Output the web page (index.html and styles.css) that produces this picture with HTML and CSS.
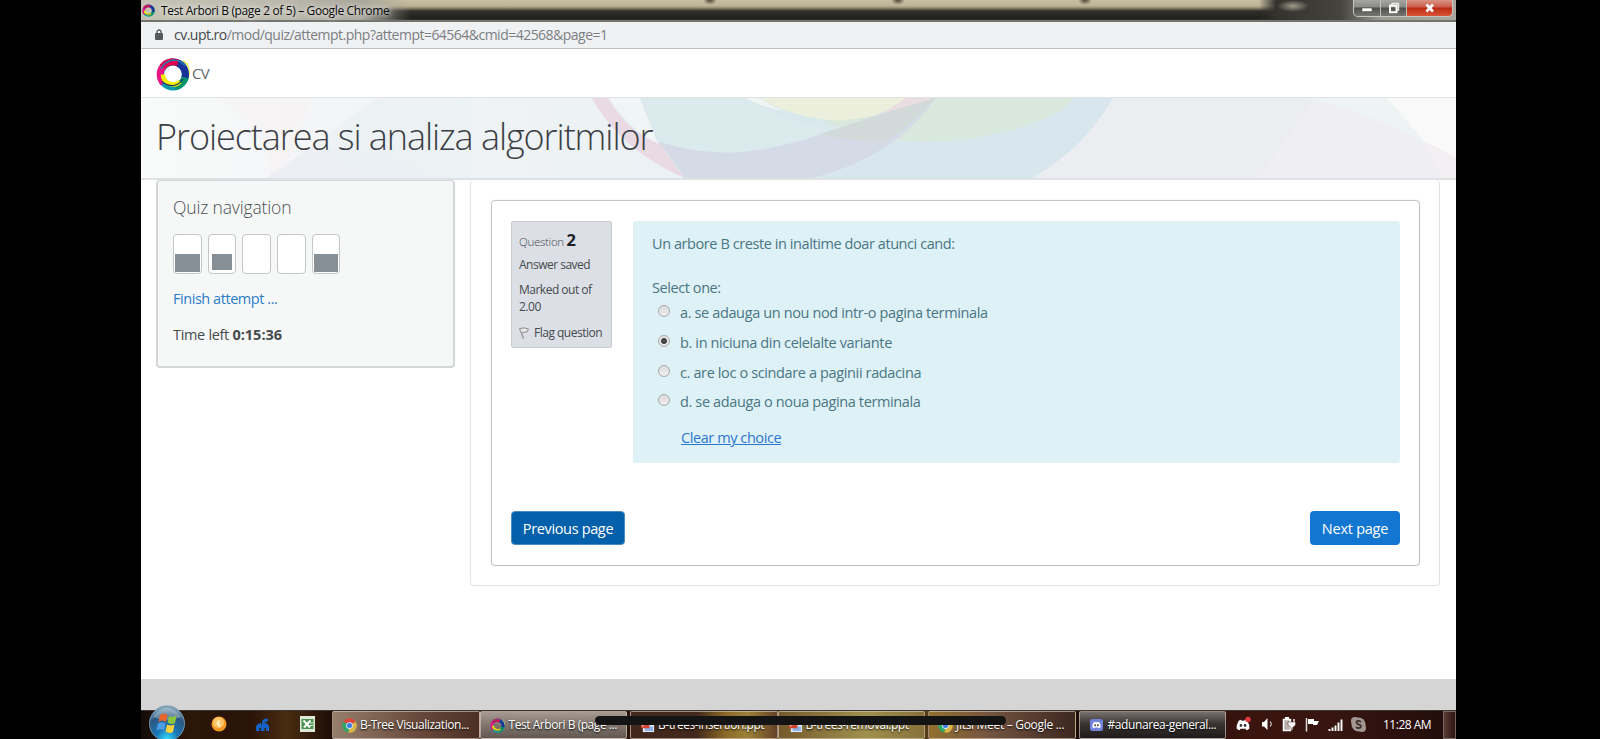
FILE: index.html
```html
<!DOCTYPE html>
<html lang="en">
<head>
<meta charset="utf-8">
<title>Test Arbori B (page 2 of 5)</title>
<link rel="stylesheet" href="styles.css">
</head>
<body>
<svg width="0" height="0" class="defs">
  <defs>
    <symbol id="ring" viewBox="0 0 34 34">
      <path d="M27 4Q34 7 33 18" fill="none" stroke="#eef25a" stroke-width="1.500"/>
      <circle cx="17" cy="17.500" r="12.500" fill="none" stroke="#0a9cae" stroke-width="7"/>
      <path d="M29.500 16A12.500 12.500 0 0 1 19 29.500" fill="none" stroke="#079468" stroke-width="7"/>
      <path d="M7.500 26A12.500 12.500 0 0 1 8 8.500" fill="none" stroke="#ec1588" stroke-width="7"/>
      <path d="M6.500 10A12.500 12.500 0 0 1 24 7.300" fill="none" stroke="#e00050" stroke-width="7"/>
      <path d="M22 6A12.500 12.500 0 0 1 29 20.500" fill="none" stroke="#1a3399" stroke-width="7"/>
      <path d="M7 17.500A10 10 0 0 0 24 24.600" fill="none" stroke="#f5f000" stroke-width="4.500"/>
      <path d="M6 24.500Q11 29 18 28.500Q24 27 27 22" fill="none" stroke="#14306c" stroke-width="1.200"/>
      <path d="M5 12Q9 4 17 3Q25 3 29 9" fill="none" stroke="#207cb0" stroke-width="1.300"/>
    </symbol>
    <symbol id="chrome" viewBox="0 0 16 16">
      <path d="M8 8L1.500 4A7.500 7.500 0 0 1 14.500 4z" fill="#e2463a"/>
      <path d="M8 8L1.500 4A7.500 7.500 0 0 0 7 15.500z" fill="#2fa866"/>
      <path d="M8 8L14.500 4A7.500 7.500 0 0 1 7 15.500z" fill="#d9b648"/>
      <circle cx="8" cy="8" r="3.600" fill="#dfe8f5"/><circle cx="8" cy="8" r="2.700" fill="#3b7be0"/>
    </symbol>
    <symbol id="ppt" viewBox="0 0 16 16">
      <rect x="3" y="2" width="12" height="13" fill="#e9eef8"/><rect x="5" y="9" width="9" height="5" fill="#8db4ea"/>
      <rect x="1" y="3" width="9" height="8" fill="#d2452f"/><path d="M3 9V5h3a1 1 0 0 1 0 2H4" stroke="#fff" fill="none"/>
    </symbol>
    <symbol id="discord" viewBox="0 0 16 14">
      <path d="M3 2Q5 1 6 1L6.500 2H9.500L10 1Q11 1 13 2Q16 7 15.500 11Q13.500 13 12 13L11 11.500H5L4 13Q2.500 13 .5 11Q0 7 3 2z"/>
      <ellipse cx="5.600" cy="7.500" rx="1.500" ry="1.700" class="eye"/><ellipse cx="10.400" cy="7.500" rx="1.500" ry="1.700" class="eye"/>
    </symbol>
  </defs>
</svg>

<div class="window">
  <div class="titlebar">
    <svg class="tab-icon"><use href="#ring"/></svg>
    <span class="win-title">Test Arbori B (page 2 of 5) – Google Chrome</span>
    <div class="win-controls">
      <div class="wc wc-min"><svg width="12" height="10"><rect x="1" y="5" width="10" height="3.500" fill="#fff" stroke="#555" stroke-width=".6"/></svg></div>
      <div class="wc wc-restore"><svg width="12" height="12"><path d="M4 3V1.500H10.500V8H9" fill="none" stroke="#eee" stroke-width="1.400"/><rect x="2" y="3.700" width="6.500" height="6.500" fill="none" stroke="#fff" stroke-width="2"/></svg></div>
      <div class="wc wc-close"><svg width="12" height="10"><path d="M2.500 1.500L9 8.500M9 1.500L2.500 8.500" stroke="#fff" stroke-width="2.600"/></svg></div>
    </div>
  </div>

  <div class="urlbar">
    <svg class="lock" viewBox="0 0 8 11"><rect y="4" width="8" height="7" rx="1" fill="#55585c"/><path d="M2 5V3a2 2 0 0 1 4 0v2" fill="none" stroke="#55585c" stroke-width="1.300"/></svg>
    <span class="url"><b>cv.upt.ro</b>/mod/quiz/attempt.php?attempt=64564&amp;cmid=42568&amp;page=1</span>
  </div>

  <header class="site-header">
    <svg class="logo"><use href="#ring"/></svg>
    <span class="brand">CV</span>
  </header>

  <div class="banner">
    <svg class="banner-art" viewBox="0 0 1315 82" preserveAspectRatio="none">
      <defs><linearGradient id="bg"><stop offset="0" stop-color="#f9fafa"/><stop offset=".17" stop-color="#f2f4f6"/><stop offset=".4" stop-color="#ebf1f4"/></linearGradient></defs>
      <rect width="1315" height="82" fill="url(#bg)"/>
      <path d="M80 0H170L150 60L130 82Q130 40 80 0z" fill="#f6f2f4" opacity=".7"/>
      <path d="M240 0L125 82H290Q250 50 170 50z" fill="#e8ebf1" opacity=".6"/>
      <path d="M240 0Q200 25 175 48L230 82H330V0z" fill="#eaf1f4" opacity=".7"/>
      <path d="M469 0H499L518 49Q490 32 469 0z" fill="#f0f5f6"/>
      <path d="M499 0H972Q945 50 892 82H543Q515 45 499 0z" fill="#d8e7ed"/>
      <path d="M499 0H604Q650 24 695 30Q650 50 590 56Q550 56 516 44z" fill="#dbeaec"/>
      <path d="M604 0H622Q660 19 698 24L680 31Q640 22 604 0z" fill="#d9e8ec"/>
      <path d="M604 0H619Q632 10 648 15Q620 9 604 0z" fill="#f0f5f4"/>
      <path d="M619 0H770Q735 22 700 24Q650 20 619 0z" fill="#ecefdc"/>
      <path d="M793 0H932Q925 16 870 33Q810 48 765 44Q720 39 680 23Q730 25 793 0z" fill="#d8e8dc"/>
      <path d="M765 0H795Q765 15 735 20z" fill="#eadde1"/>
      <path d="M516 44Q550 56 590 56Q640 54 700 30Q760 16 795 0Q755 60 672 82H543Q535 65 516 44z" fill="#d5dbe6"/>
      <path d="M680 37Q735 17 795 0Q770 28 745 44Q710 45 680 37z" fill="#d1dad8"/>
      <path d="M451 0H467Q487 35 520 48L543 82Q478 52 451 0z" fill="#e9dae4"/>
      <path d="M972 0H1315V82H892Q945 50 972 0z" fill="#ecedf1"/>
      <path d="M1175 0L1117 82H1315V0z" fill="#efeef2"/>
      <path d="M1165 0H1248L1285 47Q1230 16 1165 0z" fill="#eef3f3"/>
      <path d="M1246 0H1315V61L1283 44z" fill="#f9f9fa"/>
      <path d="M1283 44L1315 61V82H1300z" fill="#f4eff2"/>
    </svg>
    <h1>Proiectarea si analiza algoritmilor</h1>
  </div>

  <div class="content">
    <aside class="nav-card">
      <h2>Quiz navigation</h2>
      <div class="pages">
        <div class="page saved"><i></i></div>
        <div class="page saved current"><i></i></div>
        <div class="page"></div>
        <div class="page"></div>
        <div class="page saved"><i></i></div>
      </div>
      <a class="finish">Finish attempt ...</a>
      <div class="timer">Time left <b>0:15:36</b></div>
    </aside>

    <main class="main-card">
      <div class="quiz">
        <div class="question">
          <div class="info">
            <div class="qno"><span>Question</span> <b>2</b></div>
            <div class="state">Answer saved</div>
            <div class="grade">Marked out of<br>2.00</div>
            <div class="flag"><svg width="10" height="12" viewBox="0 0 10 12"><path d="M.5 1L4.500 11.500" stroke="#999" stroke-width="1.500"/><path d="M1 1.500Q5 0 9.500 2L8 5Q5 4.500 3 6" fill="#e8e8ea" stroke="#8c8c8c" stroke-width="1"/></svg><span>Flag question</span></div>
          </div>
          <div class="formulation">
            <p class="qtext">Un arbore B creste in inaltime doar atunci cand:</p>
            <p class="prompt">Select one:</p>
            <div class="answer"><i class="radio"></i><span>a. se adauga un nou nod intr-o pagina terminala</span></div>
            <div class="answer"><i class="radio on"></i><span>b. in niciuna din celelalte variante</span></div>
            <div class="answer"><i class="radio"></i><span>c. are loc o scindare a paginii radacina</span></div>
            <div class="answer"><i class="radio"></i><span>d. se adauga o noua pagina terminala</span></div>
            <a class="clear">Clear my choice</a>
          </div>
        </div>
        <div class="buttons">
          <div class="btn prev">Previous page</div>
          <div class="btn next">Next page</div>
        </div>
      </div>
    </main>
  </div>

  <div class="page-foot"></div>

  <div class="taskbar">
    <div class="orb">
      <svg width="38" height="36" viewBox="0 0 38 36">
        <defs><radialGradient id="orb" cx=".5" cy=".95" r=".9"><stop offset="0" stop-color="#35e0ff"/><stop offset=".35" stop-color="#1a78b8"/><stop offset=".75" stop-color="#2c5680"/><stop offset="1" stop-color="#86a8be"/></radialGradient></defs>
        <circle cx="19" cy="18.500" r="17.500" fill="url(#orb)" stroke="#6f94ac"/>
        <path d="M5 12Q19 -6 33 12Q19 18 5 12z" fill="#fff" opacity=".28"/>
        <path d="M12 10Q16 7 19.500 10L18 17Q14 14 10.500 17z" fill="#e8642c"/>
        <path d="M21 11Q24 13 28.500 10.500L27 18Q23 20 19.500 17.500z" fill="#8cc63e"/>
        <path d="M10 18.500Q14 16 17.500 18.500L16 25.500Q12 23 8.500 25.500z" fill="#4f9de8"/>
        <path d="M19 19.500Q22 21.500 26.500 19.500L25 27Q21 29 17.500 26.500z" fill="#fbd13c"/>
      </svg>
    </div>
    <svg class="pin pin-orange" width="16" height="16"><circle cx="8" cy="8" r="7.500" fill="#f59a23"/><circle cx="7.500" cy="6.500" r="5.500" fill="#fdc566"/><path d="M8.500 4.500L6.500 7.500L9.500 10.500" fill="none" stroke="#fff3d0" stroke-width="1.800"/></svg>
    <svg class="pin pin-blue" width="16" height="16"><path d="M1 14V9L3 7L6 5.500V8H7V4L9 2L13 1.500V4L9 5.500L12 6.500L14 9V14H11V11H9.500V14H6V11H4.500V14z" fill="#1561c4"/></svg>
    <svg class="pin pin-xls" width="15" height="16"><rect width="15" height="16" fill="#dfeadb"/><rect x="1.500" y="3" width="12" height="10" fill="#4d9150"/><path d="M3.500 4.500L10 11.500M10.500 4.500L4 11.500" stroke="#fff" stroke-width="2"/><path d="M10 7h3M10 9.500h3" stroke="#dfeadb"/></svg>
    <div class="tasks">
      <div class="task t1"><svg><use href="#chrome"/></svg><span>B-Tree Visualization...</span></div>
      <div class="task t2"><svg><use href="#ring"/></svg><span>Test Arbori B (page ...</span></div>
      <div class="task t3"><svg><use href="#ppt"/></svg><span>B-trees-insertion.ppt</span></div>
      <div class="task t4"><svg><use href="#ppt"/></svg><span>B-trees-removal.ppt</span></div>
      <div class="task t5"><svg><use href="#chrome"/></svg><span>Jitsi Meet – Google ...</span></div>
      <div class="task t6"><svg class="dc" viewBox="0 0 15 15"><rect x="1" y="1" width="13" height="12" rx="2.500" fill="#7082da"/><use href="#discord" x="3" y="3" width="9" height="8" fill="#fff"/></svg><span>#adunarea-general...</span></div>
    </div>
    <div class="tray">
      <svg class="i-dc" width="16" height="16"><use href="#discord" y="3" width="14" height="12"/><circle cx="12" cy="3.500" r="2.700" fill="#e23b3b"/></svg>
      <svg class="i-vol" width="12" height="14"><path d="M1 5H3L6.500 1V13L3 9.500H1z" fill="#fff"/><path d="M9 4.500Q11.500 7 9 9.500" fill="none" stroke="#bbb" stroke-width="1.200"/></svg>
      <svg class="i-bat" width="14" height="15"><rect x="1.500" y="2.500" width="7" height="11" fill="#b9aeaa" stroke="#fff" stroke-width="1.500"/><path d="M3 1H7" stroke="#fff" stroke-width="2"/><path d="M8 2V5M12 2V5" stroke="#fff" stroke-width="1.400"/><path d="M6 5H13.500V8L10.800 10.500V13H9.200V10.500L6 8z" fill="#fff" stroke="#40201a" stroke-width=".5"/></svg>
      <svg class="i-flag" width="15" height="15"><path d="M1.500 1V14.500" stroke="#ddd" stroke-width="1.500"/><path d="M3 2H9V4H14L12 8H8V7H3z" fill="#fff"/></svg>
      <svg class="i-sig" width="15" height="12"><path d="M1.500 12V10M4.500 12V8.500M7.500 12V6.500M10.500 12V3.500M13.500 12V.5" stroke="#fff" stroke-width="1.900"/></svg>
      <svg class="i-sky" width="17" height="17"><circle cx="5" cy="5" r="4" fill="#a39791"/><circle cx="8.500" cy="8.500" r="7" fill="#a39791"/><circle cx="12" cy="12" r="4" fill="#a39791"/><path d="M11 6Q9 4.300 7 5.200Q5.500 7 8.500 8.400Q12 9.500 10.500 11.500Q8 13 6 11" fill="none" stroke="#40312d" stroke-width="1.900"/></svg>
      <span class="clock">11:28 AM</span>
    </div>
    <div class="show-desktop"></div>
    <div class="pill"></div>
  </div>
</div>
</body>
</html>
```
FILE: styles.css
```css
* { box-sizing: border-box; }
body { margin: 0; background: #000; font-family: "Open Sans", "Noto Sans", sans-serif; color: #454a4e; }
h1, h2, p { margin: 0; font-weight: 400; }
.defs { position: absolute; }
.window { width: 1315px; height: 739px; margin-left: 141px; background: #fff; display: flex; flex-direction: column; overflow: hidden; white-space: nowrap; }

/* window frame */
.titlebar { height: 22px; flex: none; display: flex; align-items: flex-start; border-bottom: 2px solid #74746f;
  background: radial-gradient(ellipse 16px 6px at 1152px 6px, #a09b8c, transparent),
    radial-gradient(ellipse 7px 5px at 569px 0, #4c4232, transparent),
    radial-gradient(ellipse 7px 5px at 757px 0, #4c4232, transparent),
    radial-gradient(ellipse 7px 5px at 944px 0, #4c4232, transparent),
    linear-gradient(90deg, #c5c4b4 0, #b9b7aa 150px, #a9a69a 220px, rgba(150,145,130,0) 270px),
    linear-gradient(90deg, transparent 1118px, #33322d 1135px, #45443f 1200px, #9a9a92 1240px, #aaa89c 1315px),
    linear-gradient(#c9bfa2 0, #bcb295 6px, #8f886f 8px, #30302b 11px, #1d1d1a 19px, #45453f 20px); }
.tab-icon { width: 13px; height: 13px; margin: 4px 0 0 1px; }
.win-title { margin-left: 6px; font-size: 12px; line-height: 21px; color: #0b0b0b; text-shadow: 0 0 5px #fff, 0 0 8px #ddd; letter-spacing: -.36px; }
.win-controls { margin: 0 3px 0 auto; height: 17px; display: flex; border: 1px solid #c7c7c2; border-top: 0; border-radius: 0 0 5px 5px; overflow: hidden; }
.wc { display: flex; align-items: center; justify-content: center; background: linear-gradient(#a7a6a1 0, #8a8a86 7px, #4e4e4c 8px, #777673); border-right: 1px solid #c0c0bc; }
.wc-min { width: 27px; }
.wc-restore { width: 26px; }
.wc-close { width: 45px; border: 0; background: linear-gradient(#d99384 0, #cc5d49 7px, #b92a12 8px, #dc5636); }
.urlbar { height: 27px; flex: none; display: flex; background: #f0f1f3; border-bottom: 1px solid #bfc0c2; }
.lock { width: 8px; height: 11px; margin: 7px 0 0 14px; }
.url { margin-left: 11px; font-size: 14px; line-height: 25px; color: #7b7f84; letter-spacing: -.52px; }
.url b { font-weight: 400; color: #45494d; }

/* site header and banner */
.site-header { height: 48px; flex: none; display: flex; }
.logo { width: 34px; height: 34px; margin: 8px 0 0 15px; }
.brand { margin-left: 2px; font-size: 15px; line-height: 48px; color: #66696c; letter-spacing: -.8px; }
.banner { height: 83px; flex: none; display: grid; border-bottom: 2px solid #dfe2e4; border-top: 1px solid #dfe1e2; }
.banner-art { grid-area: 1/1; width: 1315px; height: 80px; }
.banner h1 { grid-area: 1/1; z-index: 1; padding-left: 15px; font-size: 36px; font-weight: 300; line-height: 77px; color: #3b3f45; letter-spacing: -1.070px; }

/* content */
.content { display: flex; align-items: flex-start; height: 499px; flex: none; padding: 0 16px 0 15px; gap: 15px; }
.nav-card { width: 299px; height: 188px; padding: 14px 15px 0; background: #f6f8f8; border: 2px solid #d4d6d7; border-top-width: 1px; border-radius: 4px; }
.nav-card h2 { font-size: 17.500px; font-weight: 300; line-height: 24px; color: #4b4f52; letter-spacing: -.15px; }
.pages { display: flex; gap: 6px; margin-top: 15px; }
.page { width: 28.700px; height: 40px; border: 1px solid #c4c6c7; border-radius: 4px; background: #fff; padding: 19px 1px 1px; display: flex; }
.page i { flex: 1; height: 18px; background: #868e96; }
.page.current { padding: 19px 3px 3px; }
.page.current i { height: 16px; }
.finish { display: block; margin-top: 13px; font-size: 14.500px; line-height: 24px; color: #2b7bc9; letter-spacing: -.45px; }
.timer { margin-top: 12px; font-size: 14.500px; line-height: 24px; letter-spacing: -.32px; }
.timer b { font-weight: 700; letter-spacing: 0; }
.main-card { flex: 1; height: 406px; padding: 20px 19px 0 20px; border: 1px solid #e3e3e3; border-top: 0; border-radius: 4px; }
.quiz { height: 366px; padding: 20px 19px 0; border: 1px solid #c2c3c4; box-shadow: 0 0 1px #c8c8c8; border-radius: 4px; display: flex; flex-direction: column; }
.question { display: flex; gap: 21px; height: 242px; }
.info { width: 101px; height: 127px; background: #dcdfe5; border: 1px solid #c8cbd0; border-radius: 2px; padding: 4px 7px; font-size: 12px; line-height: 17px; letter-spacing: -.5px; }
.qno { height: 27px; line-height: 27px; font-size: 11.500px; font-weight: 300; letter-spacing: -.3px; }
.qno b { font-size: 16.500px; font-weight: 700; color: #1d2125; }
.state { margin-top: 3px; }
.grade { margin-top: 8px; }
.flag { margin-top: 9px; display: flex; align-items: center; gap: 5px; }
.flag svg { flex: none; }
.formulation { flex: 1; background: #def1f7; border-radius: 3px; padding: 11px 19px; color: #4a7683; font-size: 14.500px; line-height: 24px; letter-spacing: -.42px; }
.prompt { margin-top: 20px; }
.answer { display: flex; height: 30px; line-height: 30px; padding-left: 6px; margin-bottom: -.2px; letter-spacing: -.37px; }
.prompt + .answer { margin-top: -2px; }
.radio { width: 12px; height: 12px; margin: 7px 10px 0 0; flex: none; border: 1px solid #a5abad; border-radius: 50%; background: linear-gradient(#dcdcdc, #f0eeee); }
.radio.on { background: radial-gradient(circle, #454545 0 2.500px, #e6e6e6 3.500px); }
.clear { display: block; width: max-content; margin: 9px 0 0 29px; color: #2d76cd; text-decoration: underline; }
.buttons { display: flex; justify-content: space-between; margin-top: 48px; }
.btn { height: 34px; border-radius: 4px; color: #fff; font-size: 14.500px; line-height: 35px; text-align: center; letter-spacing: -.35px; }
.prev { width: 114px; background: #0560ab; border: 1px solid #4a8dc6; line-height: 33px; }
.next { width: 90px; background: #1377d1; letter-spacing: -.25px; }

/* taskbar */
.page-foot { height: 31px; flex: none; background: #d5d5d5; }
.taskbar { position: relative; flex: 1; display: flex; border-top: 1px solid #3a3532; background: linear-gradient(90deg, #140b08 0, #2c1608 50px, #2a1407 110px, #4a2d10 145px, #1f0e07 190px, #2a130c 500px, #8a6b20 650px, #1c0c0a 920px, #3a140f 1110px, #371510 1200px, #200c0a 1315px); color: #fff; font-size: 12px; }
.taskbar > .pin { flex: none; }
.orb { width: 38px; height: 36px; margin: -6px 0 0 7px; flex: none; }
.pin-orange { margin: 5px 0 0 25px; }
.pin-blue { margin: 6px 0 0 28px; }
.pin-xls { margin: 5px 0 0 29px; }
.tasks { display: flex; margin-left: 17px; flex: none; }
.task { width: 147.500px; height: 28px; display: flex; align-items: center; padding-left: 9px; gap: 3px; border: 1px solid rgba(220,205,190,.6); border-radius: 2px; line-height: 26px; text-shadow: 0 1px 2px #000; letter-spacing: -.45px; }
.task svg { width: 15px; height: 15px; flex: none; }
.t1 { background: linear-gradient(90deg, #967e6c, #67483a 60%, #4c3026); }
.t2 { background: linear-gradient(#a69b93, #81766e 50%, #625852); gap: 4px; }
.t3 { margin-left: 3px; background: linear-gradient(90deg, #42281c 45%, #8c6a27 65%, #9b8238 80%, #644227); }
.t4 { background: linear-gradient(90deg, #75592c, #a0904e 60%, #87713a); }
.t5 { margin-left: 3px; background: linear-gradient(90deg, #93702f, #755540 40%, #3d2721); letter-spacing: -.3px; }
.t6 { margin-left: 3px; background: linear-gradient(#77716e, #3a3533 45%, #1f1b1a); gap: 4px; letter-spacing: -.4px; }
.eye { fill: #332e34; }
.tray { display: flex; align-items: flex-start; flex: none; fill: #fff; }
.i-dc { margin: 5px 0 0 10px; }
.i-vol { margin: 6px 0 0 9px; }
.i-bat { margin: 6px 0 0 9px; }
.i-flag { margin: 6px 0 0 9px; }
.i-sig { margin: 8px 0 0 8px; }
.i-sky { margin: 5px 0 0 7px; }
.clock { margin-left: 16px; line-height: 28px; letter-spacing: -.5px; }
.show-desktop { width: 13px; height: 28px; margin-left: auto; border: 1px solid #7b6560; background: linear-gradient(90deg, #5d3b35, #2c1512); }
.pill { position: absolute; left: 454px; top: 5px; width: 411px; height: 9px; border-radius: 5px; background: #141414; }
```
